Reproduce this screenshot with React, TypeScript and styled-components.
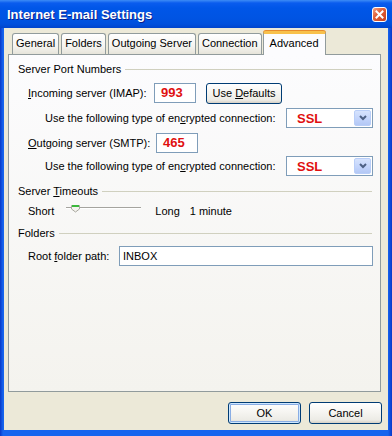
import React from "react";
import styled, { createGlobalStyle, css } from "styled-components";

const GlobalStyle = createGlobalStyle`
  html, body { margin: 0; padding: 0; }
  body {
    background: #ffffff;
    font-family: "Liberation Sans", Arial, sans-serif;
    font-size: 11px;
    color: #000;
  }
  #root { width: 392px; height: 436px; }
`;

const Window = styled.div`
  width: 392px;
  height: 436px;
  display: flex;
  flex-direction: column;
  background: linear-gradient(to right, #0838C8 0px, #1664EE 3px, #1664EE 388px, #0838C8 392px);
  overflow: hidden;
`;

const TitleBar = styled.div`
  height: 28px;
  flex: none;
  display: flex;
  align-items: center;
  justify-content: space-between;
  padding: 0 5px 0 7px;
  box-sizing: border-box;
  background: linear-gradient(
    to bottom,
    #3D8CF6 0px,
    #0A5CEE 3px,
    #0056E8 8px,
    #0054E3 18px,
    #0050DD 24px,
    #0044CC 28px
  );
`;

const Title = styled.div`
  color: #fff;
  font-weight: bold;
  font-size: 13px;
  text-shadow: 1px 1px 0 #0A1E8A;
  padding-top: 1px;
`;

const CloseButton = styled.div`
  width: 15px;
  height: 15px;
  box-sizing: border-box;
  border: 1px solid #fff;
  border-radius: 3px;
  background: linear-gradient(135deg, #F2A385 0%, #E2613A 40%, #C8401C 100%);
  display: flex;
  align-items: center;
  justify-content: center;
`;

const Client = styled.div`
  flex: 1;
  display: flex;
  flex-direction: column;
  background: #ECE9D8;
  margin: 0 4px 6px 4px;
  padding: 3px 6px 0 4px;
`;

const TabStrip = styled.div`
  display: flex;
  align-items: flex-end;
  height: 23px;
  padding-left: 4px;
  position: relative;
  z-index: 1;
`;

const Tab = styled.div<{ $active?: boolean }>`
  height: 21px;
  box-sizing: border-box;
  padding: 2px 3px 0;
  margin-right: 2px;
  border: 1px solid #919B9C;
  border-bottom: none;
  border-radius: 3px 3px 0 0;
  background: linear-gradient(#FFFFFF, #F5F4F0 60%, #E6E4DA);
  white-space: nowrap;
  line-height: 14px;
  ${(p) =>
    p.$active &&
    css`
      height: 24px;
      margin: 0 0 -1px -1px;
      padding: 2px 6px 0;
      border-top: 3px solid #F8C14B;
      background: #FCFCFE;
      box-shadow: 0 -1px 0 #E68B2C;
    `}
`;

const Panel = styled.div`
  height: 338px;
  box-sizing: border-box;
  border: 1px solid #919B9C;
  margin-right: 1px;
  background: linear-gradient(#FCFCFE, #F4F3EE);
  padding: 7px 7px 0 9px;
  display: flex;
  flex-direction: column;
`;

const GroupHeader = styled.div<{ $mt?: number }>`
  display: flex;
  align-items: center;
  gap: 4px;
  height: 14px;
  line-height: 14px;
  margin-top: ${(p) => p.$mt ?? 0}px;
  padding-right: 1px;
  white-space: nowrap;
  &::after {
    content: "";
    flex: 1;
    height: 0;
    border-top: 1px solid #D0D0BF;
  }
`;

const Row = styled.div<{ $mt: number; $indent: number; $h?: number }>`
  display: flex;
  align-items: center;
  height: ${(p) => p.$h ?? 20}px;
  margin-top: ${(p) => p.$mt}px;
  padding-left: ${(p) => p.$indent}px;
  white-space: nowrap;
`;

const Label = styled.span<{ $w?: number }>`
  flex: none;
  ${(p) => (p.$w ? `width: ${p.$w}px;` : "")}
`;

const Acc = styled.span`
  text-decoration: underline;
`;

const PortInput = styled.div`
  width: 42px;
  height: 20px;
  box-sizing: border-box;
  border: 1px solid #7F9DB9;
  background: #fff;
  padding-left: 6px;
  color: #E01010;
  font-weight: bold;
  font-size: 13px;
  line-height: 18px;
`;

const XpButton = styled.div<{ $w: number; $h?: number; $default?: boolean; $ml?: number }>`
  width: ${(p) => p.$w}px;
  height: ${(p) => p.$h ?? 22}px;
  margin-left: ${(p) => p.$ml ?? 0}px;
  box-sizing: border-box;
  border: 1px solid #003C74;
  border-radius: 3px;
  background: linear-gradient(#FFFFFF 0%, #F6F5F1 45%, #ECEBE5 85%, #D6D0C5 100%);
  display: flex;
  align-items: center;
  justify-content: center;
  ${(p) =>
    p.$default &&
    css`
      box-shadow: inset 0 0 0 1px #CEE7FF, inset 0 0 0 2px #89ADE4;
    `}
`;

const Select = styled.div`
  width: 87px;
  height: 20px;
  box-sizing: border-box;
  border: 1px solid #7F9DB9;
  background: #fff;
  display: flex;
  align-items: center;
  justify-content: space-between;
  padding: 1px;
`;

const SelectValue = styled.span`
  color: #E01010;
  font-weight: bold;
  font-size: 13px;
  padding-left: 9px;
`;

const DropButton = styled.div`
  width: 17px;
  height: 16px;
  box-sizing: border-box;
  border: 1px solid #B9CEF8;
  border-radius: 2px;
  background: linear-gradient(#D6E3FD, #C1D3FB 60%, #B3C8F5);
  display: flex;
  align-items: center;
  justify-content: center;
`;

const SliderTrack = styled.div`
  position: relative;
  width: 75px;
  height: 14px;
  margin-left: 12px;
  &::before {
    content: "";
    position: absolute;
    left: 0;
    right: 0;
    top: 3px;
    border-top: 1px solid #A5A49F;
    border-bottom: 1px solid #FFFFFF;
  }
`;

const SliderThumb = styled.svg`
  position: absolute;
  left: 4px;
  top: 0px;
`;

const TextInput = styled.div`
  flex: 1;
  height: 20px;
  box-sizing: border-box;
  border: 1px solid #7F9DB9;
  background: #fff;
  padding-left: 3px;
  line-height: 18px;
`;

const ButtonRow = styled.div`
  display: flex;
  justify-content: flex-end;
  gap: 8px;
  margin-top: 10px;
`;

const Spaced = styled.span<{ $ml: number }>`
  margin-left: ${(p) => p.$ml}px;
`;

const Chevron = () => (
  <svg width="8" height="6" viewBox="0 0 8 6">
    <path d="M1 1 L4 4 L7 1" fill="none" stroke="#4D6185" strokeWidth="2" />
  </svg>
);

const CloseX = () => (
  <svg width="9" height="9" viewBox="0 0 9 9">
    <path d="M1.5 1.5 L7.5 7.5 M7.5 1.5 L1.5 7.5" stroke="#fff" strokeWidth="2" strokeLinecap="square" />
  </svg>
);

export default function App() {
  return (
    <>
      <GlobalStyle />
      <Window>
        <TitleBar>
          <Title>Internet E-mail Settings</Title>
          <CloseButton>
            <CloseX />
          </CloseButton>
        </TitleBar>
        <Client>
          <TabStrip>
            <Tab>General</Tab>
            <Tab>Folders</Tab>
            <Tab>Outgoing Server</Tab>
            <Tab>Connection</Tab>
            <Tab $active>Advanced</Tab>
          </TabStrip>
          <Panel>
            <GroupHeader>Server Port Numbers</GroupHeader>
            <Row $mt={7} $indent={10}>
              <Label $w={126}>
                <Acc>I</Acc>ncoming server (IMAP):
              </Label>
              <PortInput>993</PortInput>
              <XpButton $w={76} $h={21} $ml={10}>
                Use&nbsp;<Acc>D</Acc>efaults
              </XpButton>
            </Row>
            <Row $mt={5} $indent={27}>
              <Label $w={241}>
                Use the following type of en<Acc>c</Acc>rypted connection:
              </Label>
              <Select>
                <SelectValue>SSL</SelectValue>
                <DropButton>
                  <Chevron />
                </DropButton>
              </Select>
            </Row>
            <Row $mt={5} $indent={10}>
              <Label $w={128}>
                <Acc>O</Acc>utgoing server (SMTP):
              </Label>
              <PortInput>465</PortInput>
            </Row>
            <Row $mt={3} $indent={27}>
              <Label $w={241}>
                Use the following type of en<Acc>c</Acc>rypted connection:
              </Label>
              <Select>
                <SelectValue>SSL</SelectValue>
                <DropButton>
                  <Chevron />
                </DropButton>
              </Select>
            </Row>
            <GroupHeader $mt={8}>
              <span>
                Server <Acc>T</Acc>imeouts
              </span>
            </GroupHeader>
            <Row $mt={6} $indent={10} $h={14}>
              <Label>Short</Label>
              <SliderTrack>
                <SliderThumb width="11" height="9" viewBox="0 0 11 9">
                  <path d="M1.5 1.5 H9.5 V5 L5.5 8 L1.5 5 Z" fill="#F4F3EE" stroke="#A9A89F" strokeWidth="1" />
                  <rect x="2" y="1" width="7" height="2" fill="#3BB83B" />
                </SliderThumb>
              </SliderTrack>
              <Spaced $ml={14}>Long</Spaced>
              <Spaced $ml={10}>1 minute</Spaced>
            </Row>
            <GroupHeader $mt={8}>Folders</GroupHeader>
            <Row $mt={6} $indent={10}>
              <Label $w={91}>
                Root <Acc>f</Acc>older path:
              </Label>
              <TextInput>INBOX</TextInput>
            </Row>
          </Panel>
          <ButtonRow>
            <XpButton $w={73} $default>
              OK
            </XpButton>
            <XpButton $w={73}>Cancel</XpButton>
          </ButtonRow>
        </Client>
      </Window>
    </>
  );
}
